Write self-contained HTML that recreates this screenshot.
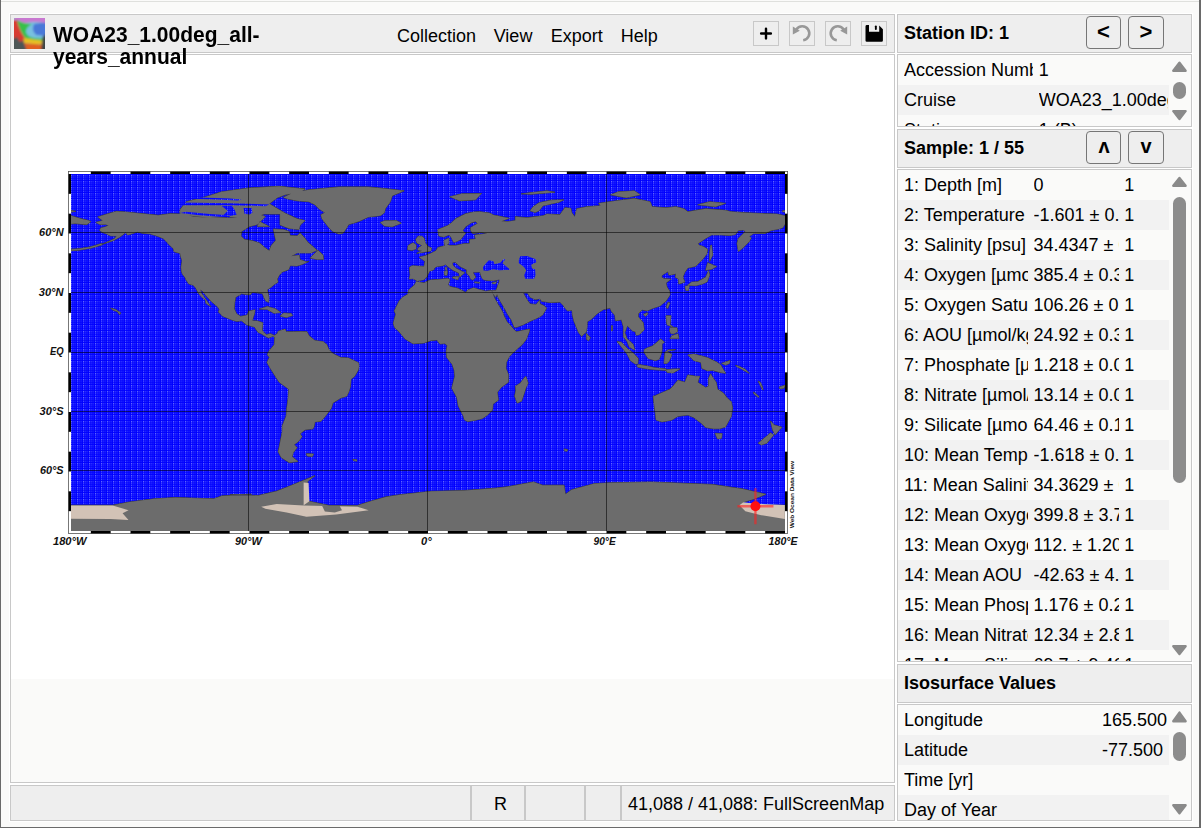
<!DOCTYPE html>
<html><head><meta charset="utf-8">
<style>
*{box-sizing:border-box;margin:0;padding:0}
html,body{width:1201px;height:828px;overflow:hidden;background:#fafaf9;font-family:"Liberation Sans",sans-serif;color:#000}
.a{position:absolute}
.pnl{position:absolute;border:1px solid #c8c8c8;box-shadow:0 0 0 1px #fff}
.hdr{background:#eeeeee}
.tbl{background:#fafaf9;overflow:hidden}
.row{position:absolute;left:0;width:271px;height:30px;font-size:18px;line-height:30px;white-space:nowrap}
.alt{background:#f2f2f2}
.c{position:absolute;top:0;overflow:hidden;white-space:nowrap}
.btn{position:absolute;border:1px solid #767676;border-radius:4px;background:#eee}
.tb{position:absolute;top:21px;width:26px;height:25px;border:1px solid #c8c8c8;background:#eee}
.sb{position:absolute;background:#8c8c8c}
.t18{font-size:18px;line-height:20px;white-space:nowrap}
.b{font-weight:bold}
</style></head><body>
<!-- window edges -->
<div class="a" style="left:0;top:0;width:1px;height:828px;background:#6a6a6a"></div>
<div class="a" style="left:1px;top:1px;width:1198px;height:1px;background:#dfe0dd"></div>
<div class="a" style="left:1199px;top:0;width:2px;height:828px;background:#6a6a6a"></div>
<div class="a" style="left:0;top:827px;width:1201px;height:1px;background:#6a6a6a"></div>

<!-- header -->
<div class="pnl hdr" style="left:10px;top:14px;width:885px;height:39px"></div>
<svg class="a" style="left:14px;top:18px" width="31" height="31" viewBox="0 0 31 31">
<defs><filter id="bl" x="-10%" y="-10%" width="120%" height="120%"><feGaussianBlur stdDeviation="0.9"/></filter><clipPath id="icl"><rect width="31" height="31"/></clipPath></defs>
<g clip-path="url(#icl)"><g filter="url(#bl)">
<rect x="-2" y="-2" width="35" height="35" fill="#78c0e0"/>
<path d="M20 6 L33 4 L33 18 L22 17 Q17 12 20 6Z" fill="#4a78d8"/>
<path d="M-2 -2 H33 V5 Q20 3 12 5 Q6 6 4 4 Z" fill="#c878d0"/>
<path d="M-2 2 L3 2 Q6 14 12 21 L8 33 L-2 33Z" fill="#d83a30"/>
<path d="M3 2 Q10 6 18 6 Q12 9 12 14 Q13 19 20 20 L33 21 L33 24 Q20 23 12 21 Q6 14 3 2Z" fill="#38c048"/>
<path d="M10 20 Q20 22 33 23 V27 Q20 26 9 25Z" fill="#e8c020"/>
<path d="M9 25 Q20 26 33 27 V33 H10Z" fill="#e06020"/>
<path d="M-2 21 L3 19 L6 24 L9 22 L13 33 H-2Z" fill="#4e5656"/>
<path d="M27 33 L28.5 19 L33 15 V33Z" fill="#3e4444"/>
</g></g>
</svg>
<div class="a b" style="left:53px;top:24px;font-size:21px;line-height:21px;white-space:nowrap;z-index:5;transform:scaleY(1.09);transform-origin:0 17.8px">WOA23_1.00deg_all-</div>
<div class="a b" style="left:53px;top:45.5px;font-size:21px;line-height:21px;white-space:nowrap;z-index:5;transform:scaleY(1.03);transform-origin:0 17.8px">years_annual</div>
<div class="a t18" style="left:397px;top:26px">Collection</div>
<div class="a t18" style="left:493.7px;top:26px">View</div>
<div class="a t18" style="left:550.8px;top:26px">Export</div>
<div class="a t18" style="left:620.8px;top:26px">Help</div>
<div class="tb" style="left:753px"><svg width="24" height="23" viewBox="0 0 24 23"><path d="M7.1 11.45H16.9M12 6.6V16.4" stroke="#000" stroke-width="2.4" stroke-linecap="round"/></svg></div>
<div class="tb" style="left:789px"><svg width="24" height="23" viewBox="0 0 24 23"><path d="M13.2 18.2 A7 7 0 1 0 6.3 7.6" fill="none" stroke="#989898" stroke-width="2.6"/><path d="M2.8 4.6 L2.8 12.6 L9.8 8.8Z" fill="#989898"/></svg></div>
<div class="tb" style="left:825px"><svg width="24" height="23" viewBox="0 0 24 23"><path d="M10.8 18.2 A7 7 0 1 1 17.7 7.6" fill="none" stroke="#989898" stroke-width="2.6"/><path d="M21.2 4.6 L21.2 12.6 L14.2 8.8Z" fill="#989898"/></svg></div>
<div class="tb" style="left:861px"><svg width="24" height="23" viewBox="0 0 24 23"><path d="M3.5 4.5Q3.5 3.1 4.9 3.1H7V9.8H17.2V3.4L20.9 7.3V18.5Q20.9 19.8 19.6 19.8H4.8Q3.5 19.8 3.5 18.5Z" fill="#000"/><rect x="12.9" y="3.4" width="1.9" height="4.6" rx="0.9" fill="#000"/></svg></div>

<!-- map panel -->
<div class="pnl" style="left:10px;top:54px;width:885px;height:729px;background:#fafaf9"></div>
<div class="a" style="left:11px;top:55px;width:883px;height:624px;background:#fff"></div>
<svg class="a" style="left:0;top:0" width="900" height="600" viewBox="0 0 900 600">
<rect x="68.0" y="171.0" width="720.0" height="363.0" fill="#fff"/><rect x="90.83" y="171.0" width="19.83" height="3" fill="#000"/><rect x="90.83" y="531.0" width="19.83" height="3" fill="#000"/><rect x="130.50" y="171.0" width="19.83" height="3" fill="#000"/><rect x="130.50" y="531.0" width="19.83" height="3" fill="#000"/><rect x="170.17" y="171.0" width="19.83" height="3" fill="#000"/><rect x="170.17" y="531.0" width="19.83" height="3" fill="#000"/><rect x="209.83" y="171.0" width="19.83" height="3" fill="#000"/><rect x="209.83" y="531.0" width="19.83" height="3" fill="#000"/><rect x="249.50" y="171.0" width="19.83" height="3" fill="#000"/><rect x="249.50" y="531.0" width="19.83" height="3" fill="#000"/><rect x="289.17" y="171.0" width="19.83" height="3" fill="#000"/><rect x="289.17" y="531.0" width="19.83" height="3" fill="#000"/><rect x="328.83" y="171.0" width="19.83" height="3" fill="#000"/><rect x="328.83" y="531.0" width="19.83" height="3" fill="#000"/><rect x="368.50" y="171.0" width="19.83" height="3" fill="#000"/><rect x="368.50" y="531.0" width="19.83" height="3" fill="#000"/><rect x="408.17" y="171.0" width="19.83" height="3" fill="#000"/><rect x="408.17" y="531.0" width="19.83" height="3" fill="#000"/><rect x="447.83" y="171.0" width="19.83" height="3" fill="#000"/><rect x="447.83" y="531.0" width="19.83" height="3" fill="#000"/><rect x="487.50" y="171.0" width="19.83" height="3" fill="#000"/><rect x="487.50" y="531.0" width="19.83" height="3" fill="#000"/><rect x="527.17" y="171.0" width="19.83" height="3" fill="#000"/><rect x="527.17" y="531.0" width="19.83" height="3" fill="#000"/><rect x="566.83" y="171.0" width="19.83" height="3" fill="#000"/><rect x="566.83" y="531.0" width="19.83" height="3" fill="#000"/><rect x="606.50" y="171.0" width="19.83" height="3" fill="#000"/><rect x="606.50" y="531.0" width="19.83" height="3" fill="#000"/><rect x="646.17" y="171.0" width="19.83" height="3" fill="#000"/><rect x="646.17" y="531.0" width="19.83" height="3" fill="#000"/><rect x="685.83" y="171.0" width="19.83" height="3" fill="#000"/><rect x="685.83" y="531.0" width="19.83" height="3" fill="#000"/><rect x="725.50" y="171.0" width="19.83" height="3" fill="#000"/><rect x="725.50" y="531.0" width="19.83" height="3" fill="#000"/><rect x="765.17" y="171.0" width="19.83" height="3" fill="#000"/><rect x="765.17" y="531.0" width="19.83" height="3" fill="#000"/><rect x="68.0" y="174.00" width="3" height="19.83" fill="#000"/><rect x="785.0" y="174.00" width="3" height="19.83" fill="#000"/><rect x="68.0" y="213.67" width="3" height="19.83" fill="#000"/><rect x="785.0" y="213.67" width="3" height="19.83" fill="#000"/><rect x="68.0" y="253.33" width="3" height="19.83" fill="#000"/><rect x="785.0" y="253.33" width="3" height="19.83" fill="#000"/><rect x="68.0" y="293.00" width="3" height="19.83" fill="#000"/><rect x="785.0" y="293.00" width="3" height="19.83" fill="#000"/><rect x="68.0" y="332.67" width="3" height="19.83" fill="#000"/><rect x="785.0" y="332.67" width="3" height="19.83" fill="#000"/><rect x="68.0" y="372.33" width="3" height="19.83" fill="#000"/><rect x="785.0" y="372.33" width="3" height="19.83" fill="#000"/><rect x="68.0" y="412.00" width="3" height="19.83" fill="#000"/><rect x="785.0" y="412.00" width="3" height="19.83" fill="#000"/><rect x="68.0" y="451.67" width="3" height="19.83" fill="#000"/><rect x="785.0" y="451.67" width="3" height="19.83" fill="#000"/><rect x="68.0" y="491.33" width="3" height="19.83" fill="#000"/><rect x="785.0" y="491.33" width="3" height="19.83" fill="#000"/><rect x="68.4" y="171.4" width="719.2" height="362.2" fill="none" stroke="#555" stroke-width="0.8"/>
</svg>
<svg class="a" style="left:71px;top:174px" width="714" height="357" viewBox="0 0 360 180" preserveAspectRatio="none">
<defs><pattern id="dots" width="6" height="6" patternUnits="userSpaceOnUse" patternTransform="scale(0.504202)"><rect width="6" height="6" fill="#0000ff"/><rect x="0" y="1" width="1" height="1" fill="#9098ff"/><rect x="2" y="1" width="1" height="1" fill="#6068ff"/><rect x="4" y="1" width="1" height="1" fill="#3840ff"/><rect x="0" y="3" width="1" height="1" fill="#7078ff"/><rect x="2" y="3" width="1" height="1" fill="#4850ff"/><rect x="4" y="3" width="1" height="1" fill="#2830ff"/><rect x="0" y="5" width="1" height="1" fill="#5058ff"/><rect x="2" y="5" width="1" height="1" fill="#3038ff"/><rect x="4" y="5" width="1" height="1" fill="#1820ff"/></pattern></defs>
<rect width="360" height="180" fill="url(#dots)"/>
<path d="M12.50 24.40L16.00 23.50L13.50 21.70L17.00 20.50L23.00 18.80L28.00 19.20L34.00 19.80L39.00 20.30L44.00 20.80L50.00 20.00L56.00 20.20L62.00 21.50L70.00 22.00L80.00 22.20L84.00 21.70L85.50 18.50L89.00 20.50L95.00 20.30L98.00 21.50L96.00 23.50L94.00 25.50L90.00 26.50L86.00 29.00L85.70 31.20L87.50 33.00L92.00 33.80L95.00 34.80L97.80 37.20L100.00 38.70L101.00 36.00L103.20 33.50L102.50 30.00L102.00 27.70L107.00 28.00L110.00 29.00L110.50 31.00L114.00 31.20L115.50 29.70L118.00 32.50L119.50 34.50L122.50 37.00L124.00 38.50L121.00 39.80L114.00 39.80L111.00 41.50L115.00 40.80L115.50 43.20L119.00 44.40L120.00 44.00L117.00 45.40L114.00 46.40L110.50 46.20L109.80 48.20L106.50 49.40L105.00 51.00L104.00 53.00L104.40 54.50L102.50 55.70L101.00 57.00L99.00 58.30L99.80 62.50L99.60 64.70L98.20 64.00L97.20 62.00L96.50 60.20L94.50 60.00L91.50 59.70L90.50 60.80L89.00 60.80L86.00 60.40L83.00 62.20L82.50 65.00L82.30 68.00L83.50 70.50L85.50 71.80L88.00 71.40L89.00 71.00L89.60 69.20L92.80 68.50L92.50 70.50L91.80 72.50L91.50 74.00L94.00 74.10L96.70 75.00L96.40 78.00L96.50 79.20L98.50 81.00L100.50 80.50L102.50 81.40L102.70 82.10L101.60 81.80L99.70 82.70L98.00 81.80L96.00 80.60L94.30 79.80L92.50 77.10L90.50 76.60L88.50 76.00L86.00 74.00L83.50 74.30L81.50 73.70L79.00 72.70L76.50 71.70L74.40 69.60L74.80 68.20L74.00 67.00L70.80 64.30L67.80 61.00L66.50 59.20L65.20 58.20L65.70 60.00L68.50 64.00L69.80 66.00L70.50 66.90L68.00 65.20L67.80 63.70L65.80 62.00L64.20 60.00L62.90 57.50L61.50 56.00L59.40 55.40L58.10 53.50L57.50 52.20L56.20 50.50L55.70 49.00L55.50 47.00L56.00 43.80L55.30 41.60L55.00 40.00L52.00 39.20L51.50 37.50L49.50 35.70L48.50 34.50L46.50 32.50L44.00 31.50L42.50 31.00L40.00 30.20L36.00 29.90L33.50 29.20L30.50 30.20L28.50 30.70L27.50 29.50L26.00 30.80L24.00 32.20L21.50 33.50L18.50 34.50L15.50 35.50L19.00 34.00L22.00 32.50L23.00 31.30L20.00 31.20L18.00 30.20L16.00 29.50L14.50 28.50L15.00 27.20L17.00 26.70L19.00 26.00L17.50 25.50L14.50 25.40ZM15.50 35.80L10.00 37.40L4.00 38.40L0.00 38.70L0.00 37.90L4.00 37.70L10.00 36.70L15.50 35.00ZM55.00 18.00L58.00 14.00L68.00 11.50L76.00 9.00L83.00 8.00L90.00 7.00L105.00 6.20L118.00 7.50L116.00 9.00L108.00 10.50L104.00 12.00L100.00 15.00L105.00 18.00L108.00 19.80L114.00 22.50L118.00 23.50L115.50 25.80L115.00 28.00L110.00 27.50L105.40 25.70L105.40 20.20L97.30 20.20L95.00 21.00L85.00 21.50L70.00 22.00L60.00 21.00L55.00 20.00ZM107.00 11.80L112.00 9.50L120.00 8.00L135.00 6.50L150.00 6.50L160.00 7.50L168.00 8.50L162.00 11.00L161.00 14.00L158.50 17.50L158.00 19.50L156.00 21.00L150.00 21.70L145.00 24.00L140.00 25.50L138.50 28.00L137.00 30.00L135.00 30.20L132.00 29.00L130.00 27.00L128.00 24.50L126.50 22.50L126.00 20.50L128.00 19.50L125.00 17.50L123.00 15.50L120.00 14.00L114.00 13.50L109.00 12.50ZM156.00 24.50L158.00 23.60L164.00 23.50L166.50 24.80L162.00 26.60L158.00 26.20ZM94.00 26.50L100.00 26.50L95.00 24.00ZM120.60 42.40L124.50 38.40L127.00 40.80L127.40 43.00L124.20 43.10ZM95.00 68.10L99.00 66.80L103.00 68.00L105.80 69.80L102.30 70.20L99.00 68.30ZM105.50 71.60L107.20 70.10L111.00 70.30L111.70 71.40L108.50 72.30ZM102.50 81.40L104.00 80.50L104.50 79.30L108.00 78.20L108.50 79.50L112.00 79.50L116.00 79.40L119.00 79.50L120.00 81.50L123.00 84.00L127.00 84.50L129.00 86.00L130.00 88.50L132.00 90.50L136.00 92.50L140.00 92.80L145.00 95.20L145.20 97.00L144.80 99.00L143.00 102.00L141.20 103.50L140.80 107.50L140.00 110.00L139.00 112.00L136.00 113.00L132.00 115.50L131.30 118.00L129.50 120.50L127.50 123.00L126.00 124.70L123.00 125.00L122.50 127.50L122.00 128.50L118.00 129.00L115.50 131.00L116.50 132.50L114.50 135.00L112.50 136.50L114.00 138.00L112.00 140.50L111.50 142.50L114.50 145.00L110.00 145.50L106.00 143.00L104.50 140.00L105.50 135.00L106.50 130.00L106.50 127.00L108.50 122.00L108.80 118.00L109.50 113.00L109.80 108.50L105.00 105.00L103.00 102.00L100.50 98.00L98.80 95.00L100.00 92.50L99.00 91.00L100.00 89.00L101.30 87.50L102.50 86.00L102.70 83.00ZM118.70 141.00L122.30 141.20L121.70 142.40L119.00 142.20ZM174.60 53.90L178.00 53.30L179.50 51.70L180.00 50.50L180.80 49.00L183.20 48.10L183.10 47.50L184.50 46.60L187.50 46.20L188.80 45.60L190.50 47.00L192.00 48.20L194.00 49.20L195.60 49.90L196.00 52.00L197.00 51.00L198.50 49.80L196.00 48.50L194.00 47.50L192.50 46.00L192.30 44.70L193.70 44.40L196.00 46.50L199.50 48.30L199.50 50.00L201.00 51.50L201.50 53.00L202.70 53.50L204.00 52.00L202.60 49.50L206.20 49.40L206.50 50.50L207.20 52.50L208.00 53.30L210.50 53.70L213.00 53.80L216.00 53.20L215.90 54.50L215.00 57.00L214.30 58.70L212.30 58.80L212.60 60.10L214.20 62.20L214.80 60.50L215.50 62.50L217.00 65.00L219.00 68.50L220.00 70.50L222.00 73.50L223.00 76.00L223.50 77.30L225.00 77.20L228.00 76.00L232.00 74.00L235.50 72.50L237.80 71.10L239.80 67.60L238.50 66.40L236.50 65.50L236.30 63.70L234.50 65.80L231.50 65.50L230.00 63.50L228.00 60.00L230.20 60.00L231.50 62.10L234.00 63.30L236.50 62.90L237.30 64.20L241.60 64.80L246.50 64.60L248.30 66.40L249.00 67.50L250.30 69.00L252.60 68.70L252.80 71.00L253.50 74.00L254.80 77.20L256.00 80.00L257.50 81.90L258.20 81.10L259.80 79.70L260.20 77.00L260.30 74.50L262.20 73.30L265.00 70.70L266.90 69.30L268.50 68.30L270.00 68.00L271.80 67.50L272.50 69.30L274.20 71.20L274.50 74.00L277.50 73.50L278.50 77.00L278.50 82.00L280.40 84.50L281.50 87.20L284.20 88.70L283.50 86.00L280.30 83.00L279.20 80.00L280.50 76.50L283.00 79.00L284.50 79.50L285.00 81.30L286.50 81.00L289.00 78.50L288.50 75.00L286.00 72.00L286.00 70.50L288.00 68.50L290.50 69.00L293.50 67.70L297.00 66.50L300.00 64.00L302.00 61.00L301.80 59.00L300.50 57.00L300.00 55.00L302.50 53.00L299.00 52.80L297.80 52.00L298.00 51.00L301.00 49.20L301.50 51.00L305.00 50.30L304.70 52.00L306.30 53.00L306.50 55.50L309.50 54.50L308.50 52.00L309.50 49.50L311.00 47.40L315.00 46.50L318.50 43.00L320.50 40.50L321.00 38.00L319.00 36.70L317.00 36.00L316.00 35.20L320.00 32.50L323.00 30.70L328.00 30.70L332.00 31.00L335.00 30.50L336.50 28.50L339.00 28.20L340.00 29.00L336.50 32.50L335.80 35.00L336.50 39.00L338.00 38.00L340.00 36.00L342.00 34.00L343.00 32.20L342.00 31.50L344.00 30.10L348.00 30.00L350.00 30.00L353.00 28.50L357.00 27.70L359.00 27.00L360.00 25.20L360.00 21.00L356.00 20.20L350.00 20.00L340.00 19.50L333.00 19.00L330.00 18.30L320.00 17.50L311.00 19.00L309.00 17.50L305.00 16.50L300.00 17.00L293.00 16.50L292.00 14.00L284.00 12.30L275.00 13.50L268.00 14.50L266.00 14.80L267.00 16.00L260.00 16.50L255.00 17.50L254.00 21.50L252.50 19.50L252.00 17.30L249.00 17.00L246.50 20.50L240.00 20.20L238.00 21.10L234.00 21.50L230.00 22.00L224.00 21.50L224.00 23.50L220.00 24.00L217.00 23.80L221.00 22.30L213.00 20.70L211.00 19.70L206.00 19.00L203.00 19.20L199.00 20.00L196.00 21.50L194.00 22.50L192.00 24.50L190.00 26.00L187.00 27.20L185.00 28.00L185.50 31.20L188.00 31.80L190.50 30.70L191.00 31.00L191.70 32.00L192.50 33.70L193.00 34.50L194.50 34.00L196.50 33.00L198.00 31.00L199.00 30.00L197.50 28.50L199.00 26.50L202.00 24.50L204.00 24.00L205.00 25.00L201.50 27.00L201.50 28.50L202.50 30.00L207.00 29.50L210.00 30.00L203.50 30.80L204.00 32.80L201.00 33.00L201.00 35.00L198.00 35.20L194.00 36.00L191.00 36.00L189.50 35.50L190.50 35.00L190.50 32.30L188.10 33.40L188.20 34.50L188.50 36.20L185.00 37.00L184.00 38.70L181.50 40.00L178.50 41.20L175.50 42.00L178.50 44.00L178.00 46.60L172.00 46.30L170.70 47.00L171.00 51.00L170.50 53.00L172.50 52.80L173.70 53.50ZM0.00 25.20L2.00 25.00L8.00 25.50L10.00 24.00L9.00 23.50L5.00 22.50L0.00 21.00ZM174.10 54.20L178.00 54.90L181.00 53.50L185.00 53.20L190.00 52.70L191.00 53.20L190.20 55.80L191.00 56.70L195.20 57.70L199.00 59.70L200.00 58.50L203.00 57.40L205.00 58.00L209.00 59.10L212.00 58.70L212.50 60.00L213.50 62.50L215.50 66.00L217.30 69.00L218.50 72.00L219.80 74.50L221.70 76.50L223.20 78.30L224.50 79.60L231.20 78.20L231.00 79.60L229.50 83.50L227.50 86.00L223.00 90.00L221.00 92.00L219.50 95.00L219.30 98.00L220.50 101.00L220.50 105.00L217.00 107.50L215.00 110.00L215.50 114.00L212.80 116.00L212.50 119.00L210.00 121.50L207.50 123.30L204.00 124.10L200.00 124.80L198.40 124.00L197.80 122.00L195.30 117.00L194.50 112.50L192.00 108.00L193.50 102.00L193.20 99.00L192.20 96.00L189.50 92.50L189.20 89.50L189.70 86.50L188.50 85.50L186.00 85.70L184.50 83.70L181.50 84.00L178.00 85.20L172.50 85.60L168.50 83.20L166.70 81.00L165.00 79.00L163.20 77.50L162.50 75.30L163.70 70.70L163.00 69.00L165.50 64.00L167.00 62.30L170.00 60.50L170.20 58.50L173.20 56.00ZM229.30 102.00L230.50 105.50L229.50 107.50L227.20 114.50L225.00 115.50L223.70 112.00L224.30 109.00L224.00 107.00L226.50 105.50L228.00 103.50ZM293.50 112.00L294.00 116.00L295.00 124.00L298.00 125.00L303.00 124.00L306.00 122.20L311.00 121.50L314.00 122.80L317.80 125.70L320.00 127.80L324.00 128.50L327.00 128.50L330.00 127.50L333.00 122.00L333.50 118.00L333.00 115.00L330.50 112.50L329.00 110.50L326.00 108.50L325.30 105.00L323.50 102.50L322.50 100.70L321.50 103.00L321.50 107.00L320.00 107.70L316.00 105.00L317.00 102.00L315.00 102.00L311.00 101.30L309.50 105.00L306.00 104.00L303.50 107.00L302.00 108.50L297.00 110.70L294.00 112.00ZM324.70 130.70L328.30 130.90L328.00 133.20L326.00 133.60ZM352.70 124.50L354.50 126.50L358.50 127.70L357.00 129.20L355.00 131.50L353.80 129.20ZM352.70 130.50L354.30 131.60L350.80 135.80L348.00 136.60L346.50 135.70L351.00 132.00ZM311.00 91.30L314.00 90.80L317.00 91.50L321.00 92.60L325.50 94.80L327.50 96.20L330.00 100.50L327.00 100.00L323.50 99.00L321.00 99.20L318.00 98.00L317.60 95.00L314.00 94.00L312.50 92.50ZM289.00 88.50L291.00 87.50L293.00 86.80L295.50 84.80L297.30 83.20L299.20 84.80L298.00 85.70L298.00 89.00L297.50 91.00L296.50 93.50L294.50 94.00L291.00 93.00L290.00 91.50L289.00 90.00ZM275.30 84.50L277.50 84.80L280.50 88.00L284.00 90.80L286.00 93.00L285.80 95.80L284.50 95.80L282.00 94.00L280.50 91.00L278.50 88.30ZM285.20 96.80L286.00 96.00L290.50 96.80L294.50 97.70L300.00 98.30L300.00 99.00L294.50 98.70L290.00 98.20L286.00 97.40ZM299.00 95.50L299.50 90.00L301.00 88.70L305.00 88.50L300.50 89.40L303.00 91.00L301.50 94.50L300.50 95.50ZM300.00 71.50L302.50 71.50L302.00 76.00L304.00 77.50L300.50 76.00ZM302.00 83.00L306.50 83.00L306.00 80.50L303.00 81.50ZM310.90 56.00L313.00 54.50L316.00 54.30L320.00 52.00L321.50 48.70L322.00 51.00L320.80 54.30L318.50 55.40L315.00 56.30L311.00 56.20ZM320.00 48.50L321.00 44.70L325.50 46.70L323.00 48.00ZM309.60 56.60L311.80 56.20L311.30 58.80L310.00 58.70ZM300.20 67.00L301.00 64.80L302.00 65.00L300.80 68.00ZM288.60 70.80L290.50 69.90L291.00 70.50L289.60 71.80ZM259.80 80.30L261.80 82.50L261.00 84.00L260.00 83.50ZM322.00 44.00L323.50 41.00L323.00 35.80L322.50 36.00L322.00 40.00ZM174.30 40.00L181.50 38.80L181.70 37.30L180.00 36.50L178.50 34.50L178.00 32.30L177.00 31.40L175.00 31.40L173.80 33.00L174.40 34.80L177.00 36.00L175.20 37.20L174.70 38.30L177.00 38.70ZM174.00 37.80L174.00 35.70L172.50 34.70L170.00 36.00L169.70 38.20L172.00 38.50ZM191.00 11.50L197.00 10.00L207.00 9.80L204.00 13.00L196.00 13.50ZM231.50 18.50L233.00 16.50L236.00 14.50L242.00 13.20L248.50 13.00L246.00 14.20L238.00 16.00L236.00 18.50L234.00 19.40ZM272.00 10.50L276.00 9.00L284.00 8.50L287.00 10.50L280.00 12.00ZM316.00 15.50L322.00 14.00L330.00 14.80L325.00 16.50ZM227.00 10.00L240.00 8.50L244.00 9.20L232.00 10.20ZM0.00 167.00L21.00 167.00L29.40 165.40L41.80 163.80L52.60 163.10L72.00 163.80L76.00 162.30L91.00 161.50L80.20 161.70L94.50 162.10L103.70 159.90L110.90 157.10L123.00 152.10L119.40 154.90L119.10 159.20L119.40 164.90L130.10 167.10L144.40 167.10L151.50 164.90L158.70 162.80L165.90 161.70L181.50 160.00L198.30 159.60L213.80 158.40L220.00 157.70L233.10 155.30L237.80 156.90L248.60 156.90L249.30 161.50L252.40 159.20L264.00 156.10L271.80 155.70L292.50 155.30L323.40 156.50L338.80 158.80L350.40 161.50L344.00 164.00L339.00 165.50L338.00 167.00L360.00 167.00L360.00 180.00L0.00 180.00ZM20.00 67.70L22.50 68.30L25.00 70.00L24.50 71.00L23.50 69.50L21.00 68.50ZM328.00 95.50L330.00 94.80L332.30 94.00L332.00 95.50L330.00 96.30ZM335.00 96.50L337.00 97.00L340.00 98.50L342.00 100.50L341.00 100.00L338.00 98.30L335.50 97.00ZM344.00 110.00L345.00 110.50L347.00 112.30L346.50 112.60L344.50 111.00ZM346.50 104.50L347.50 105.00L348.50 107.00L349.00 109.00L348.50 108.50L347.00 105.50ZM357.00 107.50L358.50 107.00L360.00 106.50L359.50 108.00L357.50 108.30ZM302.00 77.50L305.50 77.50L305.80 79.50L304.00 80.50L302.50 80.50L301.80 79.00ZM300.00 98.70L304.00 98.30L307.00 98.30L305.00 99.50L303.50 100.30L300.50 100.00ZM248.70 138.60L250.50 139.00L250.00 139.80L248.80 139.60ZM142.00 144.00L144.00 144.00L144.20 144.80L142.50 144.50ZM192.50 51.90L195.60 51.70L195.10 53.30L192.40 52.40ZM188.20 49.00L189.80 48.80L189.60 51.00L188.40 51.00ZM188.60 47.00L189.50 47.00L189.50 48.60L188.80 48.50ZM203.50 54.40L206.30 54.70L205.80 55.00L203.60 54.80ZM212.30 54.90L214.60 54.30L214.00 55.40L212.50 55.30ZM358.50 18.70L360.00 18.40L360.00 19.20L359.00 19.10ZM0.00 18.40L2.50 18.80L0.00 19.20ZM272.50 76.50L273.00 76.50L272.90 79.00L272.50 79.00Z" fill="#3c3c3c" stroke="#3c3c3c" stroke-width="0.5" stroke-linejoin="round"/>
<path d="M12.50 24.40L16.00 23.50L13.50 21.70L17.00 20.50L23.00 18.80L28.00 19.20L34.00 19.80L39.00 20.30L44.00 20.80L50.00 20.00L56.00 20.20L62.00 21.50L70.00 22.00L80.00 22.20L84.00 21.70L85.50 18.50L89.00 20.50L95.00 20.30L98.00 21.50L96.00 23.50L94.00 25.50L90.00 26.50L86.00 29.00L85.70 31.20L87.50 33.00L92.00 33.80L95.00 34.80L97.80 37.20L100.00 38.70L101.00 36.00L103.20 33.50L102.50 30.00L102.00 27.70L107.00 28.00L110.00 29.00L110.50 31.00L114.00 31.20L115.50 29.70L118.00 32.50L119.50 34.50L122.50 37.00L124.00 38.50L121.00 39.80L114.00 39.80L111.00 41.50L115.00 40.80L115.50 43.20L119.00 44.40L120.00 44.00L117.00 45.40L114.00 46.40L110.50 46.20L109.80 48.20L106.50 49.40L105.00 51.00L104.00 53.00L104.40 54.50L102.50 55.70L101.00 57.00L99.00 58.30L99.80 62.50L99.60 64.70L98.20 64.00L97.20 62.00L96.50 60.20L94.50 60.00L91.50 59.70L90.50 60.80L89.00 60.80L86.00 60.40L83.00 62.20L82.50 65.00L82.30 68.00L83.50 70.50L85.50 71.80L88.00 71.40L89.00 71.00L89.60 69.20L92.80 68.50L92.50 70.50L91.80 72.50L91.50 74.00L94.00 74.10L96.70 75.00L96.40 78.00L96.50 79.20L98.50 81.00L100.50 80.50L102.50 81.40L102.70 82.10L101.60 81.80L99.70 82.70L98.00 81.80L96.00 80.60L94.30 79.80L92.50 77.10L90.50 76.60L88.50 76.00L86.00 74.00L83.50 74.30L81.50 73.70L79.00 72.70L76.50 71.70L74.40 69.60L74.80 68.20L74.00 67.00L70.80 64.30L67.80 61.00L66.50 59.20L65.20 58.20L65.70 60.00L68.50 64.00L69.80 66.00L70.50 66.90L68.00 65.20L67.80 63.70L65.80 62.00L64.20 60.00L62.90 57.50L61.50 56.00L59.40 55.40L58.10 53.50L57.50 52.20L56.20 50.50L55.70 49.00L55.50 47.00L56.00 43.80L55.30 41.60L55.00 40.00L52.00 39.20L51.50 37.50L49.50 35.70L48.50 34.50L46.50 32.50L44.00 31.50L42.50 31.00L40.00 30.20L36.00 29.90L33.50 29.20L30.50 30.20L28.50 30.70L27.50 29.50L26.00 30.80L24.00 32.20L21.50 33.50L18.50 34.50L15.50 35.50L19.00 34.00L22.00 32.50L23.00 31.30L20.00 31.20L18.00 30.20L16.00 29.50L14.50 28.50L15.00 27.20L17.00 26.70L19.00 26.00L17.50 25.50L14.50 25.40ZM15.50 35.80L10.00 37.40L4.00 38.40L0.00 38.70L0.00 37.90L4.00 37.70L10.00 36.70L15.50 35.00ZM55.00 18.00L58.00 14.00L68.00 11.50L76.00 9.00L83.00 8.00L90.00 7.00L105.00 6.20L118.00 7.50L116.00 9.00L108.00 10.50L104.00 12.00L100.00 15.00L105.00 18.00L108.00 19.80L114.00 22.50L118.00 23.50L115.50 25.80L115.00 28.00L110.00 27.50L105.40 25.70L105.40 20.20L97.30 20.20L95.00 21.00L85.00 21.50L70.00 22.00L60.00 21.00L55.00 20.00ZM107.00 11.80L112.00 9.50L120.00 8.00L135.00 6.50L150.00 6.50L160.00 7.50L168.00 8.50L162.00 11.00L161.00 14.00L158.50 17.50L158.00 19.50L156.00 21.00L150.00 21.70L145.00 24.00L140.00 25.50L138.50 28.00L137.00 30.00L135.00 30.20L132.00 29.00L130.00 27.00L128.00 24.50L126.50 22.50L126.00 20.50L128.00 19.50L125.00 17.50L123.00 15.50L120.00 14.00L114.00 13.50L109.00 12.50ZM156.00 24.50L158.00 23.60L164.00 23.50L166.50 24.80L162.00 26.60L158.00 26.20ZM94.00 26.50L100.00 26.50L95.00 24.00ZM120.60 42.40L124.50 38.40L127.00 40.80L127.40 43.00L124.20 43.10ZM95.00 68.10L99.00 66.80L103.00 68.00L105.80 69.80L102.30 70.20L99.00 68.30ZM105.50 71.60L107.20 70.10L111.00 70.30L111.70 71.40L108.50 72.30ZM102.50 81.40L104.00 80.50L104.50 79.30L108.00 78.20L108.50 79.50L112.00 79.50L116.00 79.40L119.00 79.50L120.00 81.50L123.00 84.00L127.00 84.50L129.00 86.00L130.00 88.50L132.00 90.50L136.00 92.50L140.00 92.80L145.00 95.20L145.20 97.00L144.80 99.00L143.00 102.00L141.20 103.50L140.80 107.50L140.00 110.00L139.00 112.00L136.00 113.00L132.00 115.50L131.30 118.00L129.50 120.50L127.50 123.00L126.00 124.70L123.00 125.00L122.50 127.50L122.00 128.50L118.00 129.00L115.50 131.00L116.50 132.50L114.50 135.00L112.50 136.50L114.00 138.00L112.00 140.50L111.50 142.50L114.50 145.00L110.00 145.50L106.00 143.00L104.50 140.00L105.50 135.00L106.50 130.00L106.50 127.00L108.50 122.00L108.80 118.00L109.50 113.00L109.80 108.50L105.00 105.00L103.00 102.00L100.50 98.00L98.80 95.00L100.00 92.50L99.00 91.00L100.00 89.00L101.30 87.50L102.50 86.00L102.70 83.00ZM118.70 141.00L122.30 141.20L121.70 142.40L119.00 142.20ZM174.60 53.90L178.00 53.30L179.50 51.70L180.00 50.50L180.80 49.00L183.20 48.10L183.10 47.50L184.50 46.60L187.50 46.20L188.80 45.60L190.50 47.00L192.00 48.20L194.00 49.20L195.60 49.90L196.00 52.00L197.00 51.00L198.50 49.80L196.00 48.50L194.00 47.50L192.50 46.00L192.30 44.70L193.70 44.40L196.00 46.50L199.50 48.30L199.50 50.00L201.00 51.50L201.50 53.00L202.70 53.50L204.00 52.00L202.60 49.50L206.20 49.40L206.50 50.50L207.20 52.50L208.00 53.30L210.50 53.70L213.00 53.80L216.00 53.20L215.90 54.50L215.00 57.00L214.30 58.70L212.30 58.80L212.60 60.10L214.20 62.20L214.80 60.50L215.50 62.50L217.00 65.00L219.00 68.50L220.00 70.50L222.00 73.50L223.00 76.00L223.50 77.30L225.00 77.20L228.00 76.00L232.00 74.00L235.50 72.50L237.80 71.10L239.80 67.60L238.50 66.40L236.50 65.50L236.30 63.70L234.50 65.80L231.50 65.50L230.00 63.50L228.00 60.00L230.20 60.00L231.50 62.10L234.00 63.30L236.50 62.90L237.30 64.20L241.60 64.80L246.50 64.60L248.30 66.40L249.00 67.50L250.30 69.00L252.60 68.70L252.80 71.00L253.50 74.00L254.80 77.20L256.00 80.00L257.50 81.90L258.20 81.10L259.80 79.70L260.20 77.00L260.30 74.50L262.20 73.30L265.00 70.70L266.90 69.30L268.50 68.30L270.00 68.00L271.80 67.50L272.50 69.30L274.20 71.20L274.50 74.00L277.50 73.50L278.50 77.00L278.50 82.00L280.40 84.50L281.50 87.20L284.20 88.70L283.50 86.00L280.30 83.00L279.20 80.00L280.50 76.50L283.00 79.00L284.50 79.50L285.00 81.30L286.50 81.00L289.00 78.50L288.50 75.00L286.00 72.00L286.00 70.50L288.00 68.50L290.50 69.00L293.50 67.70L297.00 66.50L300.00 64.00L302.00 61.00L301.80 59.00L300.50 57.00L300.00 55.00L302.50 53.00L299.00 52.80L297.80 52.00L298.00 51.00L301.00 49.20L301.50 51.00L305.00 50.30L304.70 52.00L306.30 53.00L306.50 55.50L309.50 54.50L308.50 52.00L309.50 49.50L311.00 47.40L315.00 46.50L318.50 43.00L320.50 40.50L321.00 38.00L319.00 36.70L317.00 36.00L316.00 35.20L320.00 32.50L323.00 30.70L328.00 30.70L332.00 31.00L335.00 30.50L336.50 28.50L339.00 28.20L340.00 29.00L336.50 32.50L335.80 35.00L336.50 39.00L338.00 38.00L340.00 36.00L342.00 34.00L343.00 32.20L342.00 31.50L344.00 30.10L348.00 30.00L350.00 30.00L353.00 28.50L357.00 27.70L359.00 27.00L360.00 25.20L360.00 21.00L356.00 20.20L350.00 20.00L340.00 19.50L333.00 19.00L330.00 18.30L320.00 17.50L311.00 19.00L309.00 17.50L305.00 16.50L300.00 17.00L293.00 16.50L292.00 14.00L284.00 12.30L275.00 13.50L268.00 14.50L266.00 14.80L267.00 16.00L260.00 16.50L255.00 17.50L254.00 21.50L252.50 19.50L252.00 17.30L249.00 17.00L246.50 20.50L240.00 20.20L238.00 21.10L234.00 21.50L230.00 22.00L224.00 21.50L224.00 23.50L220.00 24.00L217.00 23.80L221.00 22.30L213.00 20.70L211.00 19.70L206.00 19.00L203.00 19.20L199.00 20.00L196.00 21.50L194.00 22.50L192.00 24.50L190.00 26.00L187.00 27.20L185.00 28.00L185.50 31.20L188.00 31.80L190.50 30.70L191.00 31.00L191.70 32.00L192.50 33.70L193.00 34.50L194.50 34.00L196.50 33.00L198.00 31.00L199.00 30.00L197.50 28.50L199.00 26.50L202.00 24.50L204.00 24.00L205.00 25.00L201.50 27.00L201.50 28.50L202.50 30.00L207.00 29.50L210.00 30.00L203.50 30.80L204.00 32.80L201.00 33.00L201.00 35.00L198.00 35.20L194.00 36.00L191.00 36.00L189.50 35.50L190.50 35.00L190.50 32.30L188.10 33.40L188.20 34.50L188.50 36.20L185.00 37.00L184.00 38.70L181.50 40.00L178.50 41.20L175.50 42.00L178.50 44.00L178.00 46.60L172.00 46.30L170.70 47.00L171.00 51.00L170.50 53.00L172.50 52.80L173.70 53.50ZM0.00 25.20L2.00 25.00L8.00 25.50L10.00 24.00L9.00 23.50L5.00 22.50L0.00 21.00ZM174.10 54.20L178.00 54.90L181.00 53.50L185.00 53.20L190.00 52.70L191.00 53.20L190.20 55.80L191.00 56.70L195.20 57.70L199.00 59.70L200.00 58.50L203.00 57.40L205.00 58.00L209.00 59.10L212.00 58.70L212.50 60.00L213.50 62.50L215.50 66.00L217.30 69.00L218.50 72.00L219.80 74.50L221.70 76.50L223.20 78.30L224.50 79.60L231.20 78.20L231.00 79.60L229.50 83.50L227.50 86.00L223.00 90.00L221.00 92.00L219.50 95.00L219.30 98.00L220.50 101.00L220.50 105.00L217.00 107.50L215.00 110.00L215.50 114.00L212.80 116.00L212.50 119.00L210.00 121.50L207.50 123.30L204.00 124.10L200.00 124.80L198.40 124.00L197.80 122.00L195.30 117.00L194.50 112.50L192.00 108.00L193.50 102.00L193.20 99.00L192.20 96.00L189.50 92.50L189.20 89.50L189.70 86.50L188.50 85.50L186.00 85.70L184.50 83.70L181.50 84.00L178.00 85.20L172.50 85.60L168.50 83.20L166.70 81.00L165.00 79.00L163.20 77.50L162.50 75.30L163.70 70.70L163.00 69.00L165.50 64.00L167.00 62.30L170.00 60.50L170.20 58.50L173.20 56.00ZM229.30 102.00L230.50 105.50L229.50 107.50L227.20 114.50L225.00 115.50L223.70 112.00L224.30 109.00L224.00 107.00L226.50 105.50L228.00 103.50ZM293.50 112.00L294.00 116.00L295.00 124.00L298.00 125.00L303.00 124.00L306.00 122.20L311.00 121.50L314.00 122.80L317.80 125.70L320.00 127.80L324.00 128.50L327.00 128.50L330.00 127.50L333.00 122.00L333.50 118.00L333.00 115.00L330.50 112.50L329.00 110.50L326.00 108.50L325.30 105.00L323.50 102.50L322.50 100.70L321.50 103.00L321.50 107.00L320.00 107.70L316.00 105.00L317.00 102.00L315.00 102.00L311.00 101.30L309.50 105.00L306.00 104.00L303.50 107.00L302.00 108.50L297.00 110.70L294.00 112.00ZM324.70 130.70L328.30 130.90L328.00 133.20L326.00 133.60ZM352.70 124.50L354.50 126.50L358.50 127.70L357.00 129.20L355.00 131.50L353.80 129.20ZM352.70 130.50L354.30 131.60L350.80 135.80L348.00 136.60L346.50 135.70L351.00 132.00ZM311.00 91.30L314.00 90.80L317.00 91.50L321.00 92.60L325.50 94.80L327.50 96.20L330.00 100.50L327.00 100.00L323.50 99.00L321.00 99.20L318.00 98.00L317.60 95.00L314.00 94.00L312.50 92.50ZM289.00 88.50L291.00 87.50L293.00 86.80L295.50 84.80L297.30 83.20L299.20 84.80L298.00 85.70L298.00 89.00L297.50 91.00L296.50 93.50L294.50 94.00L291.00 93.00L290.00 91.50L289.00 90.00ZM275.30 84.50L277.50 84.80L280.50 88.00L284.00 90.80L286.00 93.00L285.80 95.80L284.50 95.80L282.00 94.00L280.50 91.00L278.50 88.30ZM285.20 96.80L286.00 96.00L290.50 96.80L294.50 97.70L300.00 98.30L300.00 99.00L294.50 98.70L290.00 98.20L286.00 97.40ZM299.00 95.50L299.50 90.00L301.00 88.70L305.00 88.50L300.50 89.40L303.00 91.00L301.50 94.50L300.50 95.50ZM300.00 71.50L302.50 71.50L302.00 76.00L304.00 77.50L300.50 76.00ZM302.00 83.00L306.50 83.00L306.00 80.50L303.00 81.50ZM310.90 56.00L313.00 54.50L316.00 54.30L320.00 52.00L321.50 48.70L322.00 51.00L320.80 54.30L318.50 55.40L315.00 56.30L311.00 56.20ZM320.00 48.50L321.00 44.70L325.50 46.70L323.00 48.00ZM309.60 56.60L311.80 56.20L311.30 58.80L310.00 58.70ZM300.20 67.00L301.00 64.80L302.00 65.00L300.80 68.00ZM288.60 70.80L290.50 69.90L291.00 70.50L289.60 71.80ZM259.80 80.30L261.80 82.50L261.00 84.00L260.00 83.50ZM322.00 44.00L323.50 41.00L323.00 35.80L322.50 36.00L322.00 40.00ZM174.30 40.00L181.50 38.80L181.70 37.30L180.00 36.50L178.50 34.50L178.00 32.30L177.00 31.40L175.00 31.40L173.80 33.00L174.40 34.80L177.00 36.00L175.20 37.20L174.70 38.30L177.00 38.70ZM174.00 37.80L174.00 35.70L172.50 34.70L170.00 36.00L169.70 38.20L172.00 38.50ZM191.00 11.50L197.00 10.00L207.00 9.80L204.00 13.00L196.00 13.50ZM231.50 18.50L233.00 16.50L236.00 14.50L242.00 13.20L248.50 13.00L246.00 14.20L238.00 16.00L236.00 18.50L234.00 19.40ZM272.00 10.50L276.00 9.00L284.00 8.50L287.00 10.50L280.00 12.00ZM316.00 15.50L322.00 14.00L330.00 14.80L325.00 16.50ZM227.00 10.00L240.00 8.50L244.00 9.20L232.00 10.20ZM0.00 167.00L21.00 167.00L29.40 165.40L41.80 163.80L52.60 163.10L72.00 163.80L76.00 162.30L91.00 161.50L80.20 161.70L94.50 162.10L103.70 159.90L110.90 157.10L123.00 152.10L119.40 154.90L119.10 159.20L119.40 164.90L130.10 167.10L144.40 167.10L151.50 164.90L158.70 162.80L165.90 161.70L181.50 160.00L198.30 159.60L213.80 158.40L220.00 157.70L233.10 155.30L237.80 156.90L248.60 156.90L249.30 161.50L252.40 159.20L264.00 156.10L271.80 155.70L292.50 155.30L323.40 156.50L338.80 158.80L350.40 161.50L344.00 164.00L339.00 165.50L338.00 167.00L360.00 167.00L360.00 180.00L0.00 180.00ZM20.00 67.70L22.50 68.30L25.00 70.00L24.50 71.00L23.50 69.50L21.00 68.50ZM328.00 95.50L330.00 94.80L332.30 94.00L332.00 95.50L330.00 96.30ZM335.00 96.50L337.00 97.00L340.00 98.50L342.00 100.50L341.00 100.00L338.00 98.30L335.50 97.00ZM344.00 110.00L345.00 110.50L347.00 112.30L346.50 112.60L344.50 111.00ZM346.50 104.50L347.50 105.00L348.50 107.00L349.00 109.00L348.50 108.50L347.00 105.50ZM357.00 107.50L358.50 107.00L360.00 106.50L359.50 108.00L357.50 108.30ZM302.00 77.50L305.50 77.50L305.80 79.50L304.00 80.50L302.50 80.50L301.80 79.00ZM300.00 98.70L304.00 98.30L307.00 98.30L305.00 99.50L303.50 100.30L300.50 100.00ZM248.70 138.60L250.50 139.00L250.00 139.80L248.80 139.60ZM142.00 144.00L144.00 144.00L144.20 144.80L142.50 144.50ZM192.50 51.90L195.60 51.70L195.10 53.30L192.40 52.40ZM188.20 49.00L189.80 48.80L189.60 51.00L188.40 51.00ZM188.60 47.00L189.50 47.00L189.50 48.60L188.80 48.50ZM203.50 54.40L206.30 54.70L205.80 55.00L203.60 54.80ZM212.30 54.90L214.60 54.30L214.00 55.40L212.50 55.30ZM358.50 18.70L360.00 18.40L360.00 19.20L359.00 19.10ZM0.00 18.40L2.50 18.80L0.00 19.20ZM272.50 76.50L273.00 76.50L272.90 79.00L272.50 79.00Z" fill="#6c6c6c"/>
<path d="M208.00 48.70L207.70 47.00L209.50 44.70L210.70 43.50L213.00 44.00L213.50 45.50L216.50 44.70L218.00 43.00L219.00 43.00L217.50 45.00L221.50 48.30L216.00 48.50L213.00 48.00L210.00 48.80ZM225.80 43.50L226.50 41.50L230.00 41.30L234.30 43.00L234.60 44.50L232.00 45.70L232.50 47.70L234.00 48.00L234.20 51.00L233.50 52.80L229.00 52.80L228.50 51.00L229.50 48.50L228.50 47.00L227.00 45.70L225.80 45.00ZM55.00 15.80L80.00 15.70L98.00 16.20L100.00 15.40L80.00 14.70L55.00 14.40ZM55.00 19.70L65.00 20.80L75.00 21.60L80.00 21.80L80.00 20.80L70.00 20.20L58.00 19.00ZM58.00 11.60L80.00 12.40L86.00 12.80L84.00 13.30L76.00 13.00L58.00 12.40ZM76.00 16.10L81.00 16.00L82.50 18.00L83.50 20.50L80.00 21.20L77.00 20.50L79.00 18.50ZM87.00 17.20L91.00 17.10L91.50 19.50L90.00 20.40L87.50 20.00Z" fill="url(#dots)"/>
<path d="M339.00 165.50L345.00 166.20L359.90 166.90L359.90 174.00L348.00 172.00L340.00 170.00L337.00 167.00ZM0.00 167.20L21.00 167.20L29.00 169.50L26.00 171.00L29.00 174.50L20.00 174.00L0.00 173.80ZM95.90 167.80L103.70 166.40L117.30 167.10L144.40 167.80L150.10 169.50L133.70 171.70L118.70 172.80L108.70 170.70L98.00 168.80ZM117.30 155.50L119.80 155.80L120.20 165.00L117.30 167.00Z" fill="#d2c2b6"/>
<path d="M126.60 167.30L135.50 167.40L136.60 169.50L133.00 170.70L128.00 170.20Z" fill="#6c6c6c"/>
</svg>
<svg class="a" style="left:0;top:0" width="900" height="600" viewBox="0 0 900 600">
<g fill="#000" fill-opacity="0.55"><rect x="71" y="232" width="714" height="1"/><rect x="71" y="292" width="714" height="1"/><rect x="71" y="352" width="714" height="1"/><rect x="71" y="411" width="714" height="1"/><rect x="71" y="470" width="714" height="1"/><rect x="248" y="174" width="1" height="357"/><rect x="427" y="174" width="1" height="357"/><rect x="606" y="174" width="1" height="357"/></g>
<g font-family="Liberation Sans" font-weight="bold" font-style="italic" font-size="10.2" fill="#111"><text x="39.10" y="236.30" textLength="24.5" lengthAdjust="spacingAndGlyphs">60°N</text><text x="38.70" y="295.80" textLength="24.9" lengthAdjust="spacingAndGlyphs">30°N</text><text x="49.90" y="355.30" textLength="13.7" lengthAdjust="spacingAndGlyphs">EQ</text><text x="39.50" y="414.80" textLength="24.1" lengthAdjust="spacingAndGlyphs">30°S</text><text x="39.90" y="474.30" textLength="23.7" lengthAdjust="spacingAndGlyphs">60°S</text><text x="53.00" y="544.9" textLength="33.50" lengthAdjust="spacingAndGlyphs">180°W</text><text x="235.00" y="544.9" textLength="26.70" lengthAdjust="spacingAndGlyphs">90°W</text><text x="421.00" y="544.9" textLength="10.70" lengthAdjust="spacingAndGlyphs">0°</text><text x="593.50" y="544.9" textLength="22.20" lengthAdjust="spacingAndGlyphs">90°E</text><text x="768.60" y="544.9" textLength="29.00" lengthAdjust="spacingAndGlyphs">180°E</text></g>
<g transform="translate(793.6 528.3) rotate(-90)"><text x="0" y="0" font-family="Liberation Sans" font-weight="bold" font-size="5.6" fill="#111" textLength="67.4" lengthAdjust="spacingAndGlyphs">Web Ocean Data View</text></g>
<g fill="#ff0000"><rect x="755.44" y="506.21" width="0" height="0"/></g>
</svg>
<svg class="a" style="left:0;top:0" width="900" height="600" viewBox="0 0 900 600">
<g transform="translate(755.44 506.21)">
<path d="M-18 0H18M0 -18V18" stroke="#ff2020" stroke-opacity="0.6" stroke-width="2.4"/>
<circle r="5" fill="#ff1010"/>
</g>
</svg>

<!-- status bar -->
<div class="pnl hdr" style="left:10px;top:785px;width:885px;height:36px"></div>
<div class="a" style="left:470px;top:786px;width:2px;height:34px;background:#c8c8c8"></div>
<div class="a" style="left:524px;top:786px;width:2px;height:34px;background:#c8c8c8"></div>
<div class="a" style="left:584px;top:786px;width:2px;height:34px;background:#c8c8c8"></div>
<div class="a" style="left:620px;top:786px;width:2px;height:34px;background:#c8c8c8"></div>
<div class="a t18" style="left:494px;top:794px">R</div>
<div class="a t18" style="left:628px;top:794px">41,088 / 41,088: FullScreenMap</div>

<!-- right column -->
<div class="pnl hdr" style="left:897px;top:14px;width:295px;height:39px"></div>
<div class="a t18 b" style="left:904px;top:23px">Station ID: 1</div>
<div class="btn" style="left:1086px;top:16px;width:35px;height:33px"></div>
<div class="btn" style="left:1128px;top:16px;width:36px;height:33px"></div>
<div class="a b" style="left:1097px;top:20px;font-size:22px;line-height:24px">&lt;</div>
<div class="a b" style="left:1139.5px;top:20px;font-size:22px;line-height:24px">&gt;</div>

<div class="pnl tbl" style="left:897px;top:54px;width:295px;height:73px">
 <div class="row" style="top:0"><div class="c" style="left:6px;width:128.5px">Accession Number</div><div class="c" style="left:140.7px;width:129px">1</div></div>
 <div class="row alt" style="top:30px"><div class="c" style="left:6px;width:128.5px">Cruise</div><div class="c" style="left:140.7px;width:129px">WOA23_1.00deg_all-years_annual</div></div>
 <div class="row" style="top:60px"><div class="c" style="left:6px;width:128.5px">Station</div><div class="c" style="left:140.7px;width:129px">1 (B)</div></div>
 <div class="sb" style="left:275px;top:27px;width:13px;height:17px;border-radius:6.5px"></div>
</div>

<div class="pnl hdr" style="left:897px;top:129px;width:295px;height:39px"></div>
<div class="a t18 b" style="left:904px;top:138px">Sample: 1 / 55</div>
<div class="btn" style="left:1086px;top:131px;width:35px;height:33px"></div>
<div class="btn" style="left:1128px;top:131px;width:36px;height:33px"></div>
<div class="a b" style="left:1098.5px;top:135px;font-size:20px;line-height:22px">&#652;</div>
<div class="a b" style="left:1140.5px;top:135px;font-size:20px;line-height:22px">v</div>

<div class="pnl tbl" style="left:897px;top:169px;width:295px;height:493px">
 <div class="row" style="top:0px"><div class="c" style="left:6px;width:123.5px">1: Depth [m]</div><div class="c" style="left:135.5px;width:85px">0</div><div class="c" style="left:226.3px;width:30px">1</div></div>
 <div class="row alt" style="top:30px"><div class="c" style="left:6px;width:123.5px">2: Temperature [°C]</div><div class="c" style="left:135.5px;width:85px">-1.601 ± 0.012</div><div class="c" style="left:226.3px;width:30px">1</div></div>
 <div class="row" style="top:60px"><div class="c" style="left:6px;width:123.5px">3: Salinity [psu]</div><div class="c" style="left:135.5px;width:85px">34.4347 ± 0.01</div><div class="c" style="left:226.3px;width:30px">1</div></div>
 <div class="row alt" style="top:90px"><div class="c" style="left:6px;width:123.5px">4: Oxygen [µmol/kg]</div><div class="c" style="left:135.5px;width:85px">385.4 ± 0.33</div><div class="c" style="left:226.3px;width:30px">1</div></div>
 <div class="row" style="top:120px"><div class="c" style="left:6px;width:123.5px">5: Oxygen Saturation [%]</div><div class="c" style="left:135.5px;width:85px">106.26 ± 0.1</div><div class="c" style="left:226.3px;width:30px">1</div></div>
 <div class="row alt" style="top:150px"><div class="c" style="left:6px;width:123.5px">6: AOU [µmol/kg]</div><div class="c" style="left:135.5px;width:85px">24.92 ± 0.33</div><div class="c" style="left:226.3px;width:30px">1</div></div>
 <div class="row" style="top:180px"><div class="c" style="left:6px;width:123.5px">7: Phosphate [µmol/kg]</div><div class="c" style="left:135.5px;width:85px">1.218 ± 0.01</div><div class="c" style="left:226.3px;width:30px">1</div></div>
 <div class="row alt" style="top:210px"><div class="c" style="left:6px;width:123.5px">8: Nitrate [µmol/kg]</div><div class="c" style="left:135.5px;width:85px">13.14 ± 0.01</div><div class="c" style="left:226.3px;width:30px">1</div></div>
 <div class="row" style="top:240px"><div class="c" style="left:6px;width:123.5px">9: Silicate [µmol/kg]</div><div class="c" style="left:135.5px;width:85px">64.46 ± 0.11</div><div class="c" style="left:226.3px;width:30px">1</div></div>
 <div class="row alt" style="top:270px"><div class="c" style="left:6px;width:123.5px">10: Mean Temperature</div><div class="c" style="left:135.5px;width:85px">-1.618 ± 0.1</div><div class="c" style="left:226.3px;width:30px">1</div></div>
 <div class="row" style="top:300px"><div class="c" style="left:6px;width:123.5px">11: Mean Salinity</div><div class="c" style="left:135.5px;width:85px">34.3629 ± 0.1</div><div class="c" style="left:226.3px;width:30px">1</div></div>
 <div class="row alt" style="top:330px"><div class="c" style="left:6px;width:123.5px">12: Mean Oxygen</div><div class="c" style="left:135.5px;width:85px">399.8 ± 3.71</div><div class="c" style="left:226.3px;width:30px">1</div></div>
 <div class="row" style="top:360px"><div class="c" style="left:6px;width:123.5px">13: Mean Oxygen Sat</div><div class="c" style="left:135.5px;width:85px">112. ± 1.20</div><div class="c" style="left:226.3px;width:30px">1</div></div>
 <div class="row alt" style="top:390px"><div class="c" style="left:6px;width:123.5px">14: Mean AOU</div><div class="c" style="left:135.5px;width:85px">-42.63 ± 4.1</div><div class="c" style="left:226.3px;width:30px">1</div></div>
 <div class="row" style="top:420px"><div class="c" style="left:6px;width:123.5px">15: Mean Phosphate</div><div class="c" style="left:135.5px;width:85px">1.176 ± 0.21</div><div class="c" style="left:226.3px;width:30px">1</div></div>
 <div class="row alt" style="top:450px"><div class="c" style="left:6px;width:123.5px">16: Mean Nitrate</div><div class="c" style="left:135.5px;width:85px">12.34 ± 2.81</div><div class="c" style="left:226.3px;width:30px">1</div></div>
 <div class="row" style="top:480px"><div class="c" style="left:6px;width:123.5px">17: Mean Silicate</div><div class="c" style="left:135.5px;width:85px">69.7 ± 9.46</div><div class="c" style="left:226.3px;width:30px">1</div></div>
 <div class="row alt" style="top:510px"><div class="c" style="left:6px;width:123.5px">18: x</div><div class="c" style="left:135.5px;width:85px">1</div><div class="c" style="left:226.3px;width:30px">1</div></div>
 <div class="sb" style="left:275px;top:27px;width:13px;height:286px;border-radius:6.5px"></div>
</div>

<div class="pnl hdr" style="left:897px;top:664px;width:295px;height:39px"></div>
<div class="a t18 b" style="left:904px;top:673px">Isosurface Values</div>

<div class="pnl tbl" style="left:897px;top:704px;width:295px;height:117px">
 <div class="row" style="top:0"><div class="c" style="left:6px;width:200px">Longitude</div><div class="c" style="left:150px;width:119px;text-align:right">165.500</div></div>
 <div class="row alt" style="top:30px"><div class="c" style="left:6px;width:200px">Latitude</div><div class="c" style="left:150px;width:115px;text-align:right">-77.500</div></div>
 <div class="row" style="top:60px"><div class="c" style="left:6px;width:200px">Time [yr]</div></div>
 <div class="row alt" style="top:90px"><div class="c" style="left:6px;width:200px">Day of Year</div></div>
 <div class="sb" style="left:275px;top:27px;width:13px;height:29px;border-radius:6.5px"></div>
</div>
<svg class="a" style="left:0;top:0;z-index:3" width="1201" height="828" viewBox="0 0 1201 828">
<path d="M1179.4499999999998 62.800000000000004L1185.6 70.7L1173.3 70.7Z" fill="#8a8a8a" stroke="#8a8a8a" stroke-width="2.4" stroke-linejoin="round"/>
<path d="M1173.3 111.10000000000001L1185.6 111.10000000000001L1179.4499999999998 118.89999999999999Z" fill="#8a8a8a" stroke="#8a8a8a" stroke-width="2.4" stroke-linejoin="round"/>
<path d="M1179.4499999999998 177.89999999999998L1185.6 185.8L1173.3 185.8Z" fill="#8a8a8a" stroke="#8a8a8a" stroke-width="2.4" stroke-linejoin="round"/>
<path d="M1173.3 646.2L1185.6 646.2L1179.4499999999998 654.0Z" fill="#8a8a8a" stroke="#8a8a8a" stroke-width="2.4" stroke-linejoin="round"/>
<path d="M1179.4499999999998 712.6L1185.6 721.3L1173.3 721.3Z" fill="#8a8a8a" stroke="#8a8a8a" stroke-width="2.4" stroke-linejoin="round"/>
<path d="M1173.3 805.2L1185.6 805.2L1179.4499999999998 813.3Z" fill="#8a8a8a" stroke="#8a8a8a" stroke-width="2.4" stroke-linejoin="round"/>
</svg>
</body></html>
